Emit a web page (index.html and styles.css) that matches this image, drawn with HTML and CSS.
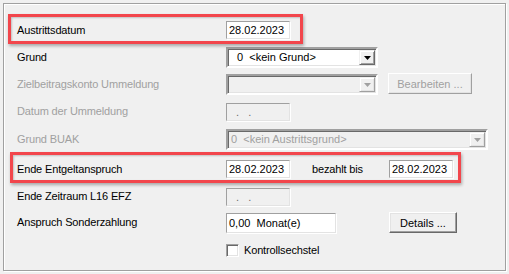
FILE: index.html
```html
<!DOCTYPE html>
<html>
<head>
<meta charset="utf-8">
<link rel="stylesheet" href="styles.css">
</head>
<body>
<div class="panel">
  <div class="form">
    <div class="label">Austrittsdatum</div>
    <div class="cell"><div class="field date">28.02.2023</div></div>

    <div class="label">Grund</div>
    <div class="cell">
      <div class="select w152"><span class="sel-text">0&nbsp;&nbsp;&lt;kein Grund&gt;</span><span class="drop"><svg width="7" height="4" viewBox="0 0 7 4"><polygon points="0,0 7,0 3.5,4" fill="#000"/></svg></span></div>
    </div>

    <div class="label disabled">Zielbeitragskonto Ummeldung</div>
    <div class="cell">
      <div class="select w152 off"><span class="sel-text"></span><span class="drop"><svg width="7" height="4" viewBox="0 0 7 4"><polygon points="0,0 7,0 3.5,4" fill="#a0a0a0"/></svg></span></div>
      <div class="btn off bearbeiten">Bearbeiten ...</div>
    </div>

    <div class="label disabled">Datum der Ummeldung</div>
    <div class="cell"><div class="field date off"><span class="dots">.&nbsp;&nbsp;.</span></div></div>

    <div class="label disabled">Grund BUAK</div>
    <div class="cell">
      <div class="select w262 off"><span class="sel-text buak">0&nbsp;&nbsp;&lt;kein Austrittsgrund&gt;</span><span class="drop"><svg width="7" height="4" viewBox="0 0 7 4"><polygon points="0,0 7,0 3.5,4" fill="#a0a0a0"/></svg></span></div>
    </div>

    <div class="label">Ende Entgeltanspruch</div>
    <div class="cell">
      <div class="field date">28.02.2023</div>
      <span class="between">bezahlt bis</span>
      <div class="field date">28.02.2023</div>
    </div>

    <div class="label">Ende Zeitraum L16 EFZ</div>
    <div class="cell"><div class="field date off"><span class="dots">.&nbsp;&nbsp;.</span></div></div>

    <div class="label">Anspruch Sonderzahlung</div>
    <div class="cell">
      <div class="field monat">0,00&nbsp;&nbsp;Monat(e)</div>
      <div class="btn details">Details ...</div>
    </div>

    <div class="label"></div>
    <div class="cell">
      <span class="check"></span><span class="check-label">Kontrollsechstel</span>
    </div>
  </div>
  <div class="mark mark1"></div>
  <div class="mark mark2"></div>
</div>
</body>
</html>
```

FILE: styles.css
```css
html, body {
  margin: 0;
  padding: 0;
  background: #f0f0f0;
}
body {
  font-family: "Liberation Sans", Arial, sans-serif;
  font-size: 11px;
  color: #000;
  width: 509px;
  height: 274px;
  overflow: hidden;
}
.panel {
  position: relative;
  margin: 3px 0 0 3px;
  box-sizing: border-box;
  width: 503px;
  height: 268px;
  border: 1px solid #a0a0a0;
  box-shadow: inset 1px 1px 0 #fff, 1px 1px 0 #fff;
  padding: 12px 0 0 13px;
}
.form {
  display: grid;
  grid-template-columns: 209px auto;
  grid-template-rows: 28px 27px 27px 27px 29px 30px 25px 27px 28px;
  align-items: center;
}
.label {
  white-space: nowrap;
  line-height: 13px;
  letter-spacing: -0.15px;
}
.disabled {
  color: #a0a0a0;
}
.cell {
  display: flex;
  align-items: center;
}
.field {
  box-sizing: border-box;
  height: 18px;
  background: #fff;
  border-style: solid;
  border-width: 1px;
  border-color: #a0a0a0 #e3e3e3 #e3e3e3 #a0a0a0;
  box-shadow: 1px 1px 0 #fff;
  padding: 0 0 0 2px;
  line-height: 16px;
  white-space: nowrap;
}
.date {
  width: 64px;
}
.field.off {
  background: #f0f0f0;
  color: #6d6d6d;
}
.dots {
  padding-left: 7px;
  letter-spacing: 1px;
}
.monat {
  width: 110px;
  height: 20px;
  line-height: 18px;
}
.select {
  box-sizing: border-box;
  height: 21px;
  display: flex;
  background: #fff;
  border-style: solid;
  border-width: 2px;
  border-color: #a0a0a0 #fff #fff #a0a0a0;
  box-shadow: inset 1px 1px 0 #696969, inset -1px -1px 0 #e3e3e3;
  padding: 1px;
}
.select.off {
  background: #f0f0f0;
  color: #a0a0a0;
}
.w152 { width: 152px; }
.w262 { width: 262px; }
.sel-text {
  flex: 1;
  padding-left: 8px;
  line-height: 15px;
  white-space: nowrap;
}
.sel-text.buak {
  padding-left: 2px;
}
.drop {
  box-sizing: border-box;
  width: 16px;
  height: 15px;
  background: #f0f0f0;
  border-style: solid;
  border-width: 1px;
  border-color: #f0f0f0 #696969 #696969 #f0f0f0;
  box-shadow: inset 1px 1px 0 #fff, inset -1px -1px 0 #a0a0a0;
  display: flex;
  align-items: center;
  justify-content: center;
}
.off .drop {
  border-color: #f0f0f0 #a0a0a0 #a0a0a0 #f0f0f0;
  box-shadow: inset 1px 1px 0 #fff, inset -1px -1px 0 #e3e3e3;
}
.btn {
  box-sizing: border-box;
  height: 21px;
  background: #f0f0f0;
  border-style: solid;
  border-width: 1px;
  border-color: #fff #696969 #696969 #fff;
  box-shadow: inset -1px -1px 0 #a0a0a0, inset 1px 1px 0 #e3e3e3;
  display: flex;
  align-items: center;
  justify-content: center;
  white-space: nowrap;
}
.btn.off {
  color: #a0a0a0;
  border-color: #fff #a0a0a0 #a0a0a0 #fff;
  box-shadow: inset -1px -1px 0 #e3e3e3;
}
.bearbeiten {
  width: 84px;
  margin-left: 10px;
  margin-top: -2px;
}
.details {
  width: 68px;
  margin-left: 53px;
}
.between {
  width: 77px;
  padding-left: 22px;
  white-space: nowrap;
  letter-spacing: -0.15px;
}
.check {
  box-sizing: border-box;
  width: 13px;
  height: 13px;
  background: #fff;
  border-style: solid;
  border-width: 1px;
  border-color: #a0a0a0 #fff #fff #a0a0a0;
  box-shadow: inset 1px 1px 0 #696969, inset -1px -1px 0 #e3e3e3;
}
.check-label {
  margin-left: 5px;
  letter-spacing: -0.15px;
}
.mark {
  position: absolute;
  box-sizing: border-box;
  border: 3px solid #f2464c;
  box-shadow: 1px 2px 3px rgba(0, 0, 0, 0.3), inset 1px 1px 2px rgba(0, 0, 0, 0.2);
  pointer-events: none;
}
.mark1 {
  left: 4px;
  top: 10px;
  width: 295px;
  height: 30px;
}
.mark2 {
  left: 6px;
  top: 148px;
  width: 451px;
  height: 31px;
}
```
